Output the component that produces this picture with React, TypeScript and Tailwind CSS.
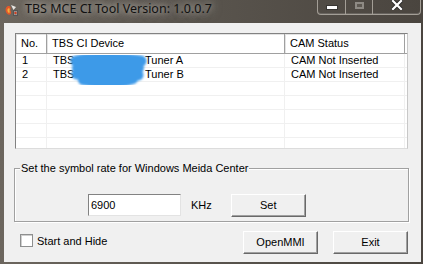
import React from "react";

function AppIcon() {
  return (
    <svg width="16" height="16" viewBox="0 0 16 16">
      <path d="M2 10 C0.5 6 3.5 3 6 4.5 C7.5 6 5.5 7.5 7 9.5 C8 12.5 4 14.5 2 10 Z" fill="#e2582a" />
      <path d="M3.5 9 C3 7 4.5 5.5 5.5 6.5 C6 8 5 8.5 5.8 10 C5.5 11.5 4 11 3.5 9 Z" fill="#f5b03c" />
      <path d="M7 3 L12 5 L9.5 8 Z" fill="#e8e6e2" />
      <path d="M9 8 L14 8 L14 14 L9 14 Z" fill="#555" />
      <path d="M10 9 L13 9 L13 13 L10 13 Z" fill="#999" />
      <circle cx="11.5" cy="11" r="1.2" fill="#d04020" />
    </svg>
  );
}

function CaptionButtons() {
  return (
    <div className="ml-auto mr-[2px] flex h-[15px] rounded-b-[4px] border border-t-0 border-[#a39e96] shadow-[inset_0_-1px_0_rgba(255,255,255,0.15)]">
      <div className="w-[28px] h-full flex items-start justify-center pt-[6px] border-r border-[#a39e96]">
        <div className="w-[10px] h-[3px] bg-white shadow-[0_0_0_1px_rgba(40,40,40,0.6)]" />
      </div>
      <div className="w-[27px] h-full flex items-start justify-center pt-[2px] border-r border-[#a39e96]">
        <div className="w-[9px] h-[7px] border-[2px] border-[#8e8a84] bg-[#5d5851]" />
      </div>
      <div className="w-[47px] h-full flex items-start justify-center pt-[0px]">
        <svg width="12" height="10" viewBox="0 0 12 10">
          <path d="M2 1 L10 9 M10 1 L2 9" stroke="#2b2b2b" strokeWidth="4" strokeLinecap="square" />
          <path d="M2 1 L10 9 M10 1 L2 9" stroke="#ffffff" strokeWidth="2.2" strokeLinecap="square" />
        </svg>
      </div>
    </div>
  );
}

function Scribble() {
  return (
    <svg
      className="absolute left-[53px] top-[19px] pointer-events-none"
      width="82"
      height="36"
      viewBox="0 0 82 36"
    >
      <defs>
        <filter id="soft" x="-10%" y="-10%" width="120%" height="120%">
          <feGaussianBlur stdDeviation="0.8" />
        </filter>
      </defs>
      <g filter="url(#soft)" stroke="#3d9ae8" strokeLinecap="round" fill="none">
        <path d="M7 8 C25 4 50 5 72 8" strokeWidth="11" />
        <path d="M8 15 C30 13 52 14 70 15" strokeWidth="10" />
        <path d="M8 21 C28 19 52 20 69 22" strokeWidth="11" />
        <path d="M14 27 C34 31 52 30 64 26" strokeWidth="10" />
      </g>
    </svg>
  );
}

const cols = "grid grid-cols-[31px_238px_120px_1fr]";

function HeaderCell({ children }: { children?: React.ReactNode }) {
  return (
    <div className="h-full flex items-center pl-[5px] bg-white border-r border-b border-[#a0a0a0] shadow-[inset_1px_1px_0_#e3e3e3] whitespace-nowrap overflow-hidden">
      {children}
    </div>
  );
}

function Cell({ children }: { children?: React.ReactNode }) {
  return (
    <div className="h-full flex items-center pl-[6px] border-r border-b border-[#f0f0f0] whitespace-nowrap overflow-hidden">
      {children}
    </div>
  );
}

function ListView() {
  const rows: [string, React.ReactNode, string][] = [
    [
      "1",
      <>
        <span className="inline-block w-[92px]">TBS</span>Tuner A
      </>,
      "CAM Not Inserted",
    ],
    [
      "2",
      <>
        <span className="inline-block w-[92px]">TBS</span>Tuner B
      </>,
      "CAM Not Inserted",
    ],
    ["", null, ""],
    ["", null, ""],
    ["", null, ""],
    ["", null, ""],
    ["", null, ""],
  ];
  return (
    <div className="relative ml-[1px] w-[393px] h-[116px] bg-white border border-t-[#828282] border-l-[#828282] border-r-[#c8c8c8] border-b-[#dcdcdc] overflow-hidden">
      <div className={`${cols} h-[20px]`}>
        <HeaderCell>No.</HeaderCell>
        <HeaderCell>TBS CI Device</HeaderCell>
        <HeaderCell>CAM Status</HeaderCell>
        <div className="h-full bg-white border-b border-[#a0a0a0]" />
      </div>
      {rows.map((r, i) => (
        <div key={i} className={`${cols} h-[14px]`}>
          <Cell>{r[0]}</Cell>
          <Cell>{r[1]}</Cell>
          <Cell>{r[2]}</Cell>
          <div className="h-full border-b border-[#f0f0f0]" />
        </div>
      ))}
      <Scribble />
    </div>
  );
}

function Button({ label, className = "" }: { label: string; className?: string }) {
  return (
    <div
      className={`h-[23px] w-[75px] flex items-center justify-center bg-[#f0f0f0] border border-t-white border-l-white border-r-[#696969] border-b-[#696969] shadow-[inset_-1px_-1px_0_#a0a0a0] ${className}`}
    >
      {label}
    </div>
  );
}

export default function App() {
  return (
    <div className="w-[423px] h-[264px] overflow-hidden flex flex-col bg-[linear-gradient(90deg,#6c665e,#5a554e_45%,#4a453f)] font-['Liberation_Sans',Arial,sans-serif] text-[11px] text-black">
      {/* Title bar */}
      <div className="h-[23px] shrink-0 flex items-start">
        <div className="flex items-center h-[19px] pl-[4px]">
          <AppIcon />
          <span className="ml-[5px] font-['Noto_Sans',sans-serif] text-[12.5px] text-[#111] [text-shadow:0_0_6px_rgba(230,226,220,0.8),0_0_12px_rgba(230,226,220,0.55)]">
            TBS MCE CI Tool Version: 1.0.0.7
          </span>
        </div>
        <CaptionButtons />
      </div>

      {/* Client area */}
      <div className="ml-[4px] w-[417px] h-[239px] bg-[#f0f0f0] pt-[10px] px-[10px] flex flex-col">
        <ListView />

        {/* Group box */}
        <div className="mt-[19px] w-[395px] h-[54px] border border-[#a0a0a0] shadow-[1px_1px_0_#ffffff,inset_1px_1px_0_#ffffff]">
          <span className="-mt-[7px] ml-[5px] px-[1px] inline-block leading-[13px] bg-[#f0f0f0] align-top">
            Set the symbol rate for Windows Meida Center
          </span>
          <div className="mt-[8px] flex items-center pl-[73px]">
            <div className="w-[93px] h-[22px] bg-white border border-t-[#828282] border-l-[#828282] border-r-[#e3e3e3] border-b-[#e3e3e3] flex items-center pl-[2px]">
              6900
            </div>
            <span className="ml-[10px]">KHz</span>
            <Button label="Set" className="ml-[19px] w-[74px]" />
          </div>
        </div>

        {/* Bottom row */}
        <div className="mt-[9px] flex items-start h-[23px]">
          <div className="ml-[6px] mt-[3px] w-[13px] h-[13px] bg-white border border-[#8e8f8f] shadow-[inset_1px_1px_0_#cfcfcf]" />
          <span className="ml-[4px] mt-[4px] leading-[13px]">Start and Hide</span>
          <Button label="OpenMMI" className="ml-auto" />
          <Button label="Exit" className="ml-[15px] mr-[3px]" />
        </div>
      </div>
    </div>
  );
}
